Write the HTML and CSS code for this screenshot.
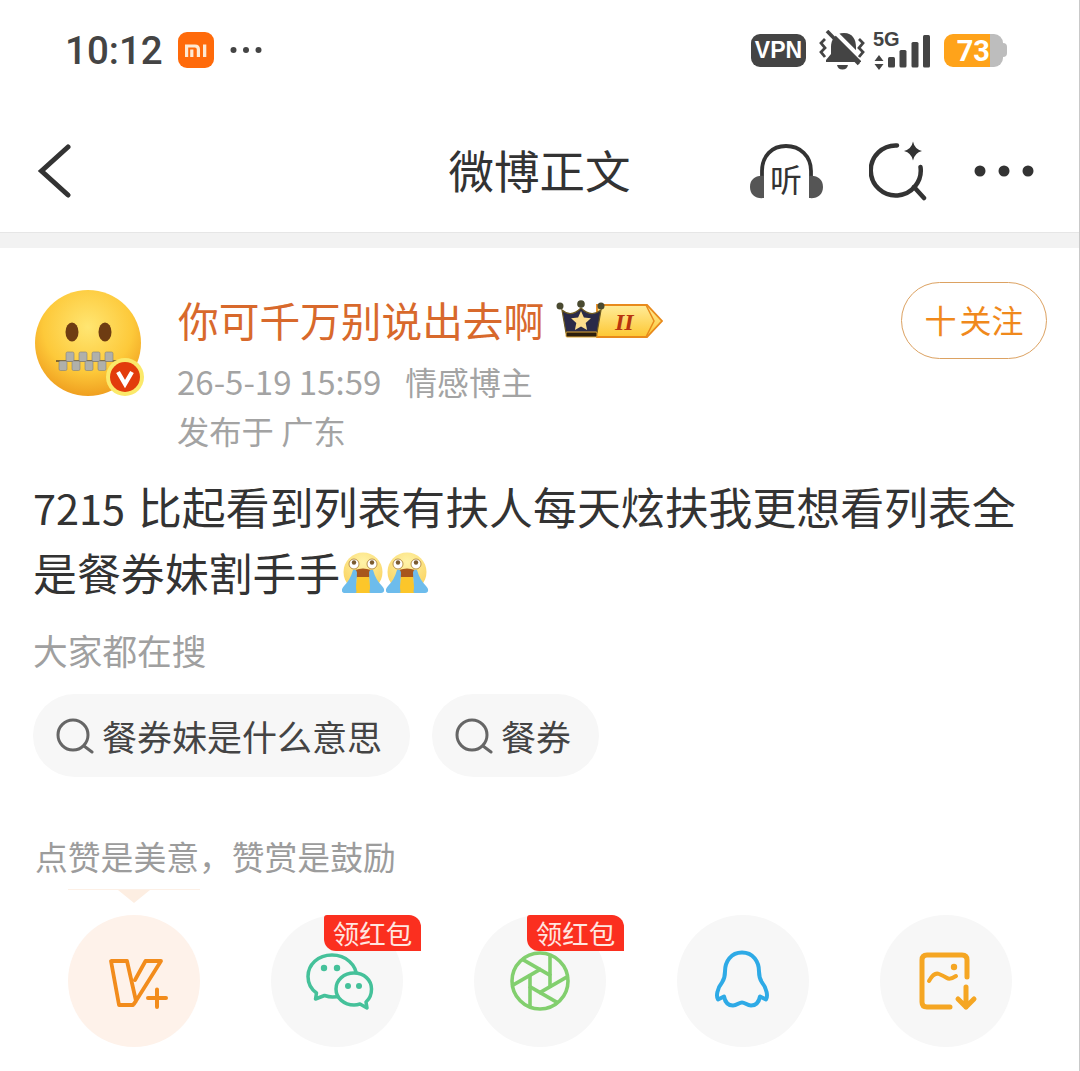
FILE: index.html
```html
<!DOCTYPE html>
<html lang="zh-CN">
<head>
<meta charset="utf-8">
<title>微博正文</title>
<link rel="stylesheet" href="styles.css">
</head>
<body>
<svg class="defs" width="0" height="0" aria-hidden="true">
  <defs>
    <radialGradient id="faceG" cx="50%" cy="35%" r="68%">
      <stop offset="0" stop-color="#ffe672"/><stop offset=".62" stop-color="#fdc93a"/><stop offset="1" stop-color="#ee9a1c"/>
    </radialGradient>
    <radialGradient id="cryG" cx="50%" cy="25%" r="70%">
      <stop offset="0" stop-color="#fff3a8"/><stop offset="1" stop-color="#fad462"/>
    </radialGradient>
    <linearGradient id="tagG" x1="0" y1="0" x2="0" y2="1">
      <stop offset="0" stop-color="#ffec9a"/><stop offset="1" stop-color="#fdc733"/>
    </linearGradient>
    <symbol id="cry" viewBox="342 552 43 42">
      <circle cx="363" cy="572" r="19.500" fill="url(#cryG)"/>
      <path d="M355 570q8-3 16 0l-2 9h-12z" fill="#a8561c"/>
      <path d="M357 577h12l2 16h-16z" fill="#fcc62a"/>
      <path d="M353 570c2-1 4 0 4 3l-1 14c0 4 2 6-2 6h-9c-4 0-4-4-1-7 4-4 7-9 9-16z" fill="#6dbcec"/>
      <path d="M373 570c-2-1-4 0-4 3l1 14c0 4-2 6 2 6h9c4 0 4-4 1-7-4-4-7-9-9-16z" fill="#6dbcec"/>
      <circle cx="354" cy="564" r="5" fill="#fff" stroke="#a87a2c" stroke-width=".8"/><circle cx="372" cy="564" r="5" fill="#fff" stroke="#a87a2c" stroke-width=".8"/>
      <circle cx="354" cy="562.500" r="2.200" fill="#7a5a30"/><circle cx="372" cy="562.500" r="2.200" fill="#7a5a30"/>
    </symbol>
  </defs>
</svg>

<main class="page">
  <header class="status">
    <div class="status-left">
      <span class="time">10:12</span>
      <svg class="mi" viewBox="178 33 36 36">
        <rect x="178" y="33" width="36" height="36" rx="9" fill="#ff6a0a"/>
        <path d="M185 45.500h10q5 0 5 5V58h-3.200v-7.500q0-2-2-2h-6.600V58H185zM190.200 50.500h3.200V58h-3.200zM203 45.500h3.300V58H203z" fill="#fde9d4"/>
      </svg>
      <svg class="more-small" viewBox="230 46 32 8" fill="#444"><circle cx="233.500" cy="50" r="3"/><circle cx="246" cy="50" r="3"/><circle cx="258.500" cy="50" r="3"/></svg>
    </div>
    <div class="status-right">
      <span class="vpn">VPN</span>
      <svg class="bell" viewBox="819 28 46 40">
        <path d="M844 31c-9 0-13 7-13 14v7l-5 6v2h35v-2l-5-6v-7c0-7-3-14-12-14z" fill="#444"/>
        <path d="M837 63h11q-1 4.500-5.500 4.500T837 63z" fill="#444"/>
        <path d="M832 27l31 31" stroke="#fff" stroke-width="4"/>
        <path d="M827 29l32 33" stroke="#444" stroke-width="3.600"/>
        <path d="M825 37l-4 4 4 5-4 4 4 5M859 37l4 4-4 5 4 4-4 5" fill="none" stroke="#444" stroke-width="2.800"/>
      </svg>
      <svg class="signal" viewBox="873 24 58 44" fill="#444">
        <text class="fivg" x="873" y="43.500">5G</text>
        <path d="M879 53l4.500 6h-9zM879 68l-4.500-6h9z"/>
        <rect x="888" y="55" width="7" height="10.500" rx="1.500"/>
        <rect x="899.500" y="48" width="7" height="17.500" rx="1.500"/>
        <rect x="911.500" y="40" width="7" height="25.500" rx="1.500"/>
        <rect x="923" y="33" width="7" height="32.500" rx="1.500"/>
      </svg>
      <div class="battery"><span class="battery-level">73</span><span class="battery-rest"></span><span class="battery-nub"></span></div>
    </div>
  </header>

  <nav class="nav">
    <div class="nav-left">
      <svg class="back" viewBox="36 144 36 54"><path d="M67 147L40.500 171 67 195" fill="none" stroke="#333" stroke-width="5" stroke-linecap="round" stroke-linejoin="miter"/></svg>
    </div>
    <h1 class="title">微博正文</h1>
    <div class="nav-right">
      <svg class="listen" viewBox="751 143 73 55">
        <path d="M763 193V170c0-15 10-25 24-25s25 10 25 25v23" fill="none" stroke="#333" stroke-width="3.800" stroke-linecap="round"/>
        <path d="M765 175v22c-8 1-14-3-14-11s6-12 14-11zM810 175v22c8 1 14-3 14-11s-6-12-14-11z" fill="#555"/>
        <text class="listen-text" x="771" y="190.500">听</text>
      </svg>
      <svg class="spark" viewBox="870 141 58 60">
        <path d="M898 145.500A25 25 0 1 0 921.500 167" fill="none" stroke="#333" stroke-width="4.500" stroke-linecap="round"/>
        <path d="M915 187l10 11" stroke="#333" stroke-width="4.500" stroke-linecap="round"/>
        <path d="M914 141.500q1.500 7.500 9 9.500-7.500 2-9 9.500-1.500-7.500-9-9.500 7.500-2 9-9.500z" fill="#333"/>
      </svg>
      <svg class="more" viewBox="975 165 60 12" fill="#333"><circle cx="981" cy="171" r="5.500"/><circle cx="1005" cy="171" r="5.500"/><circle cx="1029" cy="171" r="5.500"/></svg>
    </div>
  </nav>

  <div class="band"></div>

  <section class="post">
    <div class="author">
      <div class="avatar">
        <svg class="avatar-face" viewBox="35 290 106 106">
          <circle cx="88" cy="343" r="53" fill="url(#faceG)"/>
          <ellipse cx="72" cy="332" rx="6.500" ry="9.500" fill="#6e3c12"/>
          <ellipse cx="105" cy="332" rx="6.500" ry="9.500" fill="#6e3c12"/>
          <path d="M56 361h62" stroke="#5a4a30" stroke-width="1.500"/>
          <g fill="#b0b0aa" stroke="#80807a" stroke-width=".6">
            <rect x="66" y="352" width="8" height="9.500" rx="1.500"/><rect x="79" y="352" width="8" height="9.500" rx="1.500"/><rect x="92" y="352" width="8" height="9.500" rx="1.500"/><rect x="105" y="352" width="8" height="9.500" rx="1.500"/>
            <rect x="59" y="361" width="8" height="9.500" rx="1.500"/><rect x="72" y="361" width="8" height="9.500" rx="1.500"/><rect x="85" y="361" width="8" height="9.500" rx="1.500"/><rect x="98" y="361" width="8" height="9.500" rx="1.500"/>
          </g>
        </svg>
        <svg class="avatar-badge" viewBox="105 357 40 40">
          <circle cx="125" cy="377" r="19" fill="#fbe96a"/>
          <circle cx="125" cy="377" r="15" fill="#e23c0c"/>
          <path d="M118 372l7 12 7-12" fill="none" stroke="#fff" stroke-width="4.200"/>
        </svg>
      </div>
      <div class="info">
        <div class="name-row">
          <span class="name">你可千万别说出去啊</span>
          <svg class="crown" viewBox="557 298 107 42">
            <path d="M598 305h50l15 16-15 16h-50z" fill="url(#tagG)" stroke="#e88a1c" stroke-width="1.800"/>
            <path d="M647 305l8 16-8 16" fill="none" stroke="#e88a1c" stroke-width="1.500"/>
            <text class="crown-text" x="616" y="330">II</text>
            <path d="M563 310Q572 318 582 308 592 318 602 310L598 333H567z" fill="#2a2a48" stroke="#6e5a20" stroke-width="1.200"/>
            <rect x="567" y="332" width="31" height="5" rx="1" fill="#2c1e0c" stroke="#e0a838" stroke-width="1"/>
            <circle cx="561" cy="306" r="3.500" fill="#4a4a30"/><circle cx="582" cy="304" r="3.800" fill="#4a4a30"/><circle cx="602" cy="306" r="3.500" fill="#4a4a30"/>
            <path d="M582 311l2.900 6.500 7 .8-5.200 4.700 1.400 7-6.100-3.500-6.100 3.500 1.400-7-5.200-4.700 7-.8z" fill="#fbdc8c"/>
          </svg>
        </div>
        <div class="meta"><span>26-5-19 15:59</span><span class="meta-role">情感博主</span></div>
        <div class="meta meta-place">发布于 广东</div>
      </div>
      <button class="follow"><span class="follow-plus">十</span>关注</button>
    </div>

    <p class="content"><span class="num">7215</span> 比起看到列表有扶人每天炫扶我更想看列表全是餐券妹割手手<svg class="cry"><use href="#cry"/></svg><svg class="cry"><use href="#cry"/></svg></p>

    <div class="search-label">大家都在搜</div>
    <div class="tags">
      <div class="tag">
        <svg class="tag-icon" viewBox="56 718 38 36"><circle cx="73" cy="735" r="15" fill="none" stroke="#666" stroke-width="3"/><path d="M84 746l8 6" stroke="#666" stroke-width="3" stroke-linecap="round"/></svg>
        <span>餐券妹是什么意思</span>
      </div>
      <div class="tag">
        <svg class="tag-icon" viewBox="56 718 38 36"><circle cx="73" cy="735" r="15" fill="none" stroke="#666" stroke-width="3"/><path d="M84 746l8 6" stroke="#666" stroke-width="3" stroke-linecap="round"/></svg>
        <span>餐券</span>
      </div>
    </div>

    <div class="tip">点赞是美意，赞赏是鼓励</div>
    <div class="pointer"><span class="pointer-tip"></span></div>

    <div class="shares">
      <div class="share share-active">
        <svg class="share-icon" viewBox="68 915 132 132">
          <g fill="none" stroke="#f28c1c" stroke-width="3.800" stroke-linejoin="round" stroke-linecap="round">
            <path d="M111 961h16l9 40-3 4h-14zM135 980l10.500-19H161l-27 43"/>
          </g>
          <path d="M148 998h18M157 989.500v17.500" stroke="#f28c1c" stroke-width="4" stroke-linecap="round"/>
        </svg>
      </div>
      <div class="share">
        <svg class="share-icon" viewBox="271 915 132 132">
          <g fill="#f7f7f7" stroke="#45c19a" stroke-width="3.500" stroke-linejoin="round">
            <path d="M332 955c-14 0-24 9.500-24 21.500 0 7 3 12.500 8.500 16.500l-1 6 9-3.500c3 1 5.500 1.500 8 1.500 14 0 24-9 24-20.500S346 955 332 955z"/>
            <path d="M354 973c-10 0-18 7-18 16s8 16 18 16c2 0 4-.3 6-1l7 4-1-6c3.500-3 5.500-8 5.500-13 0-9-7.500-16-17.500-16z"/>
          </g>
          <g fill="#45c19a"><circle cx="324" cy="968" r="3.200"/><circle cx="337" cy="968" r="3.200"/><circle cx="348" cy="986" r="3"/><circle cx="359" cy="986" r="3"/></g>
        </svg>
        <span class="badge">领红包</span>
      </div>
      <div class="share">
        <svg class="share-icon" viewBox="474 915 132 132">
          <g fill="none" stroke="#82cf6e" stroke-width="3.600">
            <circle cx="540" cy="981" r="28"/>
            <path d="M550 988V954"/>
            <path d="M550 988V954" transform="rotate(60 540 981)"/>
            <path d="M550 988V954" transform="rotate(120 540 981)"/>
            <path d="M550 988V954" transform="rotate(180 540 981)"/>
            <path d="M550 988V954" transform="rotate(240 540 981)"/>
            <path d="M550 988V954" transform="rotate(300 540 981)"/>
          </g>
        </svg>
        <span class="badge">领红包</span>
      </div>
      <div class="share">
        <svg class="share-icon" viewBox="677 915 132 132">
          <path d="M742 952.500c-11 0-17 9-17 19 0 5-1 8-3 11-5 6-6 14-4 17l6-3c1 5 4 9 9 9 4 0 6-3 9-3s5 3 9 3c5 0 8-4 9-9l6 3c2-3 1-11-4-17-2-3-3-6-3-11 0-10-6-19-17-19z" fill="none" stroke="#2eaae6" stroke-width="4" stroke-linejoin="round"/>
        </svg>
      </div>
      <div class="share">
        <svg class="share-icon" viewBox="880 915 132 132">
          <g fill="none" stroke="#f5a623" stroke-width="5" stroke-linecap="round" stroke-linejoin="round">
            <path d="M967 977v-17q0-5-5-5h-35q-5 0-5 5v42q0 5 5 5h23"/>
            <path d="M929 981q5-9 10-7t8 4 9-2" stroke-width="4"/>
            <path d="M966 987v20M958 999l8 8 8-8"/>
          </g>
          <circle cx="954" cy="967" r="3.200" fill="#f5a623"/>
        </svg>
      </div>
    </div>
  </section>
</main>
</body>
</html>
```
FILE: styles.css
```css
* { box-sizing: border-box; }

html, body {
  margin: 0;
  padding: 0;
  background: #fff;
}

body {
  font-family: "Noto Sans CJK SC", "Noto Sans", sans-serif;
  color: #333;
}

.defs { position: absolute; }

.page {
  width: 1080px;
  height: 1071px;
  overflow: hidden;
  border-right: 1px solid #c9c9c9;
  display: flex;
  flex-direction: column;
}

/* status bar */
.status {
  height: 110px;
  flex: none;
  padding: 0 72px 10px 65px;
  display: flex;
  align-items: center;
  justify-content: space-between;
}

.status-left, .status-right { display: flex; align-items: center; }

.time {
  font-family: Roboto, "Liberation Sans", sans-serif;
  font-weight: 500;
  font-size: 38.500px;
  line-height: 40px;
  padding-top: 1px;
  color: #444;
  width: 113px;
}

.mi { width: 36px; height: 36px; margin-right: 16px; }
.more-small { width: 32px; height: 8px; }

.vpn {
  width: 55px;
  height: 33px;
  border-radius: 9px;
  background: #444;
  color: #fff;
  font-family: "Liberation Sans", sans-serif;
  font-weight: 700;
  font-size: 23px;
  line-height: 33px;
  text-align: center;
  margin-right: 13px;
}

.bell { width: 46px; height: 40px; margin-right: 8px; }
.signal { width: 58px; height: 44px; margin: -4px 13px 0 0; }

.fivg {
  font-family: "Liberation Sans", sans-serif;
  font-weight: 700;
  font-size: 20px;
}

.battery { display: flex; align-items: center; height: 33px; }

.battery-level {
  width: 46px;
  height: 33px;
  background: #ffa31a;
  border-radius: 9px 0 0 9px;
  color: #fff;
  font-family: Roboto, sans-serif;
  font-weight: 700;
  font-size: 29px;
  line-height: 34px;
  text-align: right;
}

.battery-rest {
  width: 13px;
  height: 33px;
  background: #bdbdbd;
  border-radius: 0 9px 9px 0;
}

.battery-nub {
  width: 4px;
  height: 14px;
  background: #bdbdbd;
  border-radius: 0 4px 4px 0;
}

/* nav */
.nav {
  height: 122px;
  flex: none;
  display: grid;
  grid-template-columns: 1fr auto 1fr;
  align-items: center;
}

.nav-left { padding-left: 37px; display: flex; }
.back { width: 36px; height: 54px; }

.title {
  margin: 0;
  padding-bottom: 5px;
  font-size: 45.500px;
  font-weight: 400;
  line-height: 60px;
  color: #333;
}

.nav-right {
  display: flex;
  align-items: center;
  justify-content: flex-end;
  padding-right: 45px;
}

.listen { width: 73px; height: 55px; margin-right: 46px; }
.listen-text { font-size: 32px; fill: #333; }
.spark { width: 58px; height: 60px; margin-right: 47px; }
.more { width: 60px; height: 12px; }

.band {
  height: 16px;
  flex: none;
  background: #f2f2f2;
  border-top: 1px solid #e6e6e6;
}

/* post */
.post { padding: 34px 0 0 34px; flex: 1; }

.author { display: flex; align-items: flex-start; padding-right: 32px; }

.avatar { position: relative; width: 106px; height: 106px; margin: 8px 37px 0 1px; flex: none; }
.avatar-face { width: 106px; height: 106px; display: block; }
.avatar-badge { position: absolute; left: 70px; top: 67px; width: 40px; height: 40px; }

.info { flex: 1; padding-top: 13px; min-width: 0; }

.name-row { display: flex; align-items: center; height: 50px; margin-bottom: 12px; }

.name { font-size: 40.700px; line-height: 50px; color: #d8692c; margin-right: 12px; white-space: nowrap; }

.crown { width: 107px; height: 42px; flex: none; margin-top: -2px; }
.crown-text { font-family: "Liberation Serif", serif; font-weight: 700; font-style: italic; font-size: 24px; fill: #b8340f; }

.meta { margin-left: -1px; font-size: 33px; line-height: 49px; color: #a3a3a3; white-space: nowrap; }
.meta-role { margin-left: 24px; font-size: 31.800px; }
.meta-place { font-size: 32.300px; }

.follow {
  width: 146px;
  height: 77px;
  flex: none;
  padding: 0 0 4px;
  border: 1px solid #dca262;
  border-radius: 39px;
  background: #fff;
  color: #f0891c;
  font: inherit;
  font-size: 32px;
}

.follow-plus { margin-right: 3px; }

.content {
  margin: 19px 30px 0 -1px;
  font-size: 43.900px;
  line-height: 65px;
  color: #333;
}

.num { font-size: 41.500px; margin-right: 3px; }

.cry { width: 43px; height: 42px; vertical-align: -3px; margin: 0 -1px 0 2px; }

.search-label {
  margin: 20px 0 0 -1px;
  font-size: 34.700px;
  line-height: 50px;
  color: #a0a0a0;
}

.tags { display: flex; gap: 22px; margin: 19px 0 0 -1px; }

.tag {
  height: 83px;
  border-radius: 42px;
  background: #f7f7f7;
  padding: 0 28px 0 23px;
  display: flex;
  align-items: center;
  gap: 8px;
  font-size: 35px;
  color: #444;
  white-space: nowrap;
}

.tag-icon { width: 38px; height: 36px; flex: none; }

.tip {
  margin: 54px 0 0 1px;
  font-size: 32.800px;
  line-height: 50px;
  color: #9c9c9c;
}

.pointer {
  position: relative;
  width: 132px;
  height: 1px;
  margin: 8px 0 25px 34px;
  background: #fdf0e6;
}

.pointer-tip {
  position: absolute;
  left: 50px;
  top: 1px;
  border-style: solid;
  border-width: 13px 16px 0;
  border-color: #fdeee2 transparent transparent;
}

.shares { display: flex; gap: 71px; margin-left: 34px; }

.share {
  position: relative;
  width: 132px;
  height: 132px;
  flex: none;
  border-radius: 50%;
  background: #f7f7f7;
}

.share-active { background: #fef2ea; }

.share-icon { width: 132px; height: 132px; display: block; }

.badge {
  position: absolute;
  left: 53px;
  top: 0;
  width: 97px;
  height: 36px;
  border-radius: 3px 12px 0 12px;
  background: #fb2f1f;
  color: #ffe6e0;
  font-size: 26.500px;
  line-height: 36px;
  text-align: center;
}
```
